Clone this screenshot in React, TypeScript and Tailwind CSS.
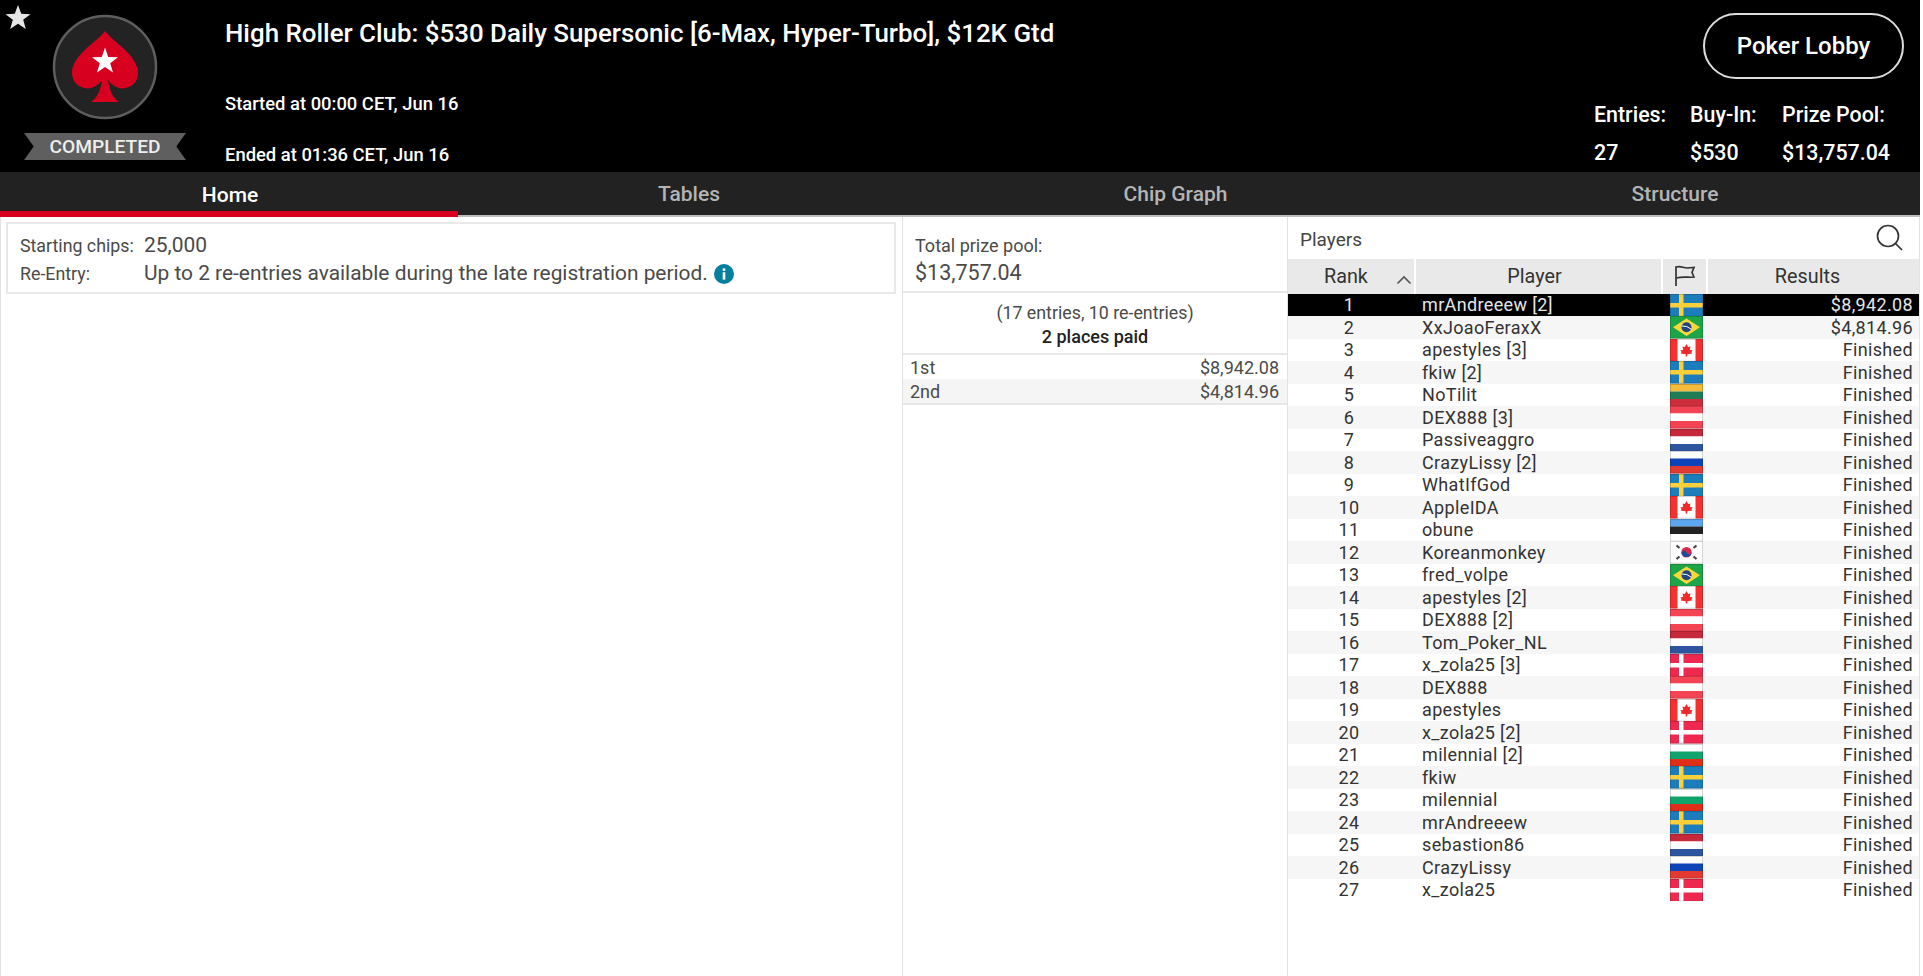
import React from "react";

type Code = "se" | "br" | "ca" | "lt" | "at" | "nl" | "ru" | "ee" | "kr" | "dk" | "bg";

const Stripes = ({ c }: { c: [string, string, string] }) => (
  <>
    <rect width="33" height="7.5" y="0" fill={c[0]} />
    <rect width="33" height="7.5" y="7.5" fill={c[1]} />
    <rect width="33" height="7.5" y="15" fill={c[2]} />
  </>
);

const FlagArt = ({ code }: { code: Code }) => {
  switch (code) {
    case "se":
      return (
        <>
          <rect width="33" height="22.5" fill="#1b7dbb" />
          <rect x="9" width="4.5" height="22.5" fill="#fdd03b" />
          <rect y="9" width="33" height="4.5" fill="#fdd03b" />
        </>
      );
    case "br":
      return (
        <>
          <rect width="33" height="22.5" fill="#1ea548" />
          <path d="M16.5 2.5 L30 11.2 L16.5 20 L3 11.2 Z" fill="#fbd83a" />
          <circle cx="16.5" cy="11.2" r="5" fill="#25437f" />
          <path d="M11.8 10 Q17 9.5 21 13" stroke="#fff" strokeWidth="1" fill="none" />
        </>
      );
    case "ca":
      return (
        <>
          <rect width="33" height="22.5" fill="#fff" />
          <rect width="7.5" height="22.5" fill="#f5302f" />
          <rect x="25.5" width="7.5" height="22.5" fill="#f5302f" />
          <path d="M16.5 5 L18.2 8 L20.4 7.4 L19.8 11 L22.6 11.2 L21.4 13.2 L22.4 14.4 L17.3 15.2 L17.3 17.6 L15.7 17.6 L15.7 15.2 L10.6 14.4 L11.6 13.2 L10.4 11.2 L13.2 11 L12.6 7.4 L14.8 8 Z" fill="#f02a2a" />
        </>
      );
    case "lt":
      return <Stripes c={["#f4bb3c", "#1e7d54", "#cc2e3c"]} />;
    case "at":
      return <Stripes c={["#f44353", "#ffffff", "#f44353"]} />;
    case "nl":
      return <Stripes c={["#c5293b", "#ffffff", "#2e56a0"]} />;
    case "ru":
      return <Stripes c={["#ffffff", "#0f44b8", "#e13a31"]} />;
    case "ee":
      return <Stripes c={["#5ba6ee", "#232323", "#ffffff"]} />;
    case "bg":
      return <Stripes c={["#ffffff", "#10a36b", "#df2f18"]} />;
    case "dk":
      return (
        <>
          <rect width="33" height="22.5" fill="#ef2850" />
          <rect x="9" width="4.5" height="22.5" fill="#fff" />
          <rect y="9" width="33" height="4.5" fill="#fff" />
        </>
      );
    case "kr":
      return (
        <>
          <rect width="33" height="22.5" fill="#fff" />
          <circle cx="16.5" cy="11.2" r="5.2" fill="#d8294a" />
          <path d="M11.5 12.4 A5.2 5.2 0 0 0 21.6 10.2 A2.6 2.6 0 0 1 16.5 11.2 A2.6 2.6 0 0 0 11.5 12.4 Z" fill="#1c4e96" />
          <g stroke="#444" strokeWidth="2.2">
            <path d="M6.5 4.5 L9.5 7" />
            <path d="M23.5 7 L26.5 4.5" />
            <path d="M6.5 18 L9.5 15.5" />
            <path d="M23.5 15.5 L26.5 18" />
          </g>
        </>
      );
  }
};

const Flag = ({ code }: { code: Code }) => (
  <svg width="33" height="22.5" viewBox="0 0 33 22.5" className="block">
    <FlagArt code={code} />
    <rect x="0.4" y="0.4" width="32.2" height="21.7" fill="none" stroke="#000" strokeOpacity="0.22" strokeWidth="0.8" />
  </svg>
);

const players: [string, Code, string][] = [
  ["mrAndreeew [2]", "se", "$8,942.08"],
  ["XxJoaoFeraxX", "br", "$4,814.96"],
  ["apestyles [3]", "ca", "Finished"],
  ["fkiw [2]", "se", "Finished"],
  ["NoTilit", "lt", "Finished"],
  ["DEX888 [3]", "at", "Finished"],
  ["Passiveaggro", "nl", "Finished"],
  ["CrazyLissy [2]", "ru", "Finished"],
  ["WhatIfGod", "se", "Finished"],
  ["AppleIDA", "ca", "Finished"],
  ["obune", "ee", "Finished"],
  ["Koreanmonkey", "kr", "Finished"],
  ["fred_volpe", "br", "Finished"],
  ["apestyles [2]", "ca", "Finished"],
  ["DEX888 [2]", "at", "Finished"],
  ["Tom_Poker_NL", "nl", "Finished"],
  ["x_zola25 [3]", "dk", "Finished"],
  ["DEX888", "at", "Finished"],
  ["apestyles", "ca", "Finished"],
  ["x_zola25 [2]", "dk", "Finished"],
  ["milennial [2]", "bg", "Finished"],
  ["fkiw", "se", "Finished"],
  ["milennial", "bg", "Finished"],
  ["mrAndreeew", "se", "Finished"],
  ["sebastion86", "nl", "Finished"],
  ["CrazyLissy", "ru", "Finished"],
  ["x_zola25", "dk", "Finished"],
];

const Logo = () => (
  <svg width="108" height="108" viewBox="0 0 108 108" className="block">
    <circle cx="54" cy="54" r="51" fill="#232323" stroke="#5e5e5e" strokeWidth="2.5" />
    <path
      d="M54 18 C62 29 87 42 87 60 C87 73 72 80 62 72 C60 71 58 69 57 66 C58 76 61 84 68 89 L40 89 C47 84 50 76 51 66 C50 69 48 71 46 72 C36 80 21 73 21 60 C21 42 46 29 54 18 Z"
      fill="#d7001f"
    />
    <path d="M54 34.5 L57.2 44 L67 44.2 L59.2 50.2 L62 59.5 L54 54 L46 59.5 L48.8 50.2 L41 44.2 L50.8 44 Z" fill="#fff" />
  </svg>
);

export default function App() {
  return (
    <div className="w-[1923px] h-[976px] overflow-hidden bg-white font-['Roboto',sans-serif]">
      <div className="w-[1920px] h-full flex flex-col">
        {/* header */}
        <div className="h-[172px] bg-black text-white flex shrink-0">
          <div className="w-[225px] shrink-0 relative flex flex-col items-start">
            <svg width="26" height="26" viewBox="0 0 24 24" className="absolute left-[5px] top-[4px]">
              <path d="M12 1 L15 9 L23.5 9.4 L16.8 14.6 L19.2 23 L12 18.2 L4.8 23 L7.2 14.6 L0.5 9.4 L9 9 Z" fill="#e6e6e6" />
            </svg>
            <div className="mt-[13px] w-[210px] flex justify-center">
              <Logo />
            </div>
            <div className="mt-[12px] w-[210px] flex justify-center">
              <div className="w-[162px] h-[27px] pt-[2px] bg-[#5f5f5f] flex items-center justify-center text-[19.2px] font-medium text-[#eeeeee] [clip-path:polygon(0_0,100%_0,94%_50%,100%_100%,0_100%,6%_50%)]">
                COMPLETED
              </div>
            </div>
          </div>
          <div className="flex-1 flex flex-col">
            <div className="mt-[17px] text-[25.9px] leading-[32px] font-medium whitespace-nowrap">
              High Roller Club: $530 Daily Supersonic [6-Max, Hyper-Turbo], $12K Gtd
            </div>
            <div className="mt-[43px] text-[18.4px] leading-[24px] font-medium">Started at 00:00 CET, Jun 16</div>
            <div className="mt-[27px] text-[18.4px] leading-[24px] font-medium">Ended at 01:36 CET, Jun 16</div>
          </div>
          <div className="w-[330px] shrink-0 flex flex-col items-end pr-[16px]">
            <div className="mt-[13px] w-[201px] h-[66px] rounded-full border-2 border-[#dcdcdc] flex items-center justify-center text-[24px] font-medium">
              Poker Lobby
            </div>
            <div className="mt-[23px] w-full pl-[4px] grid grid-cols-[96px_92px_auto] text-[21.4px] font-medium leading-[26px] gap-y-[12px]">
              <div>Entries:</div>
              <div>Buy-In:</div>
              <div>Prize Pool:</div>
              <div>27</div>
              <div>$530</div>
              <div>$13,757.04</div>
            </div>
          </div>
        </div>

        {/* tabs */}
        <div className="h-[45px] bg-[#222222] flex shrink-0 border-b-2 border-[#bdbdbd] text-[21px] font-medium text-[#b4b4b4]">
          <div className="w-[458px] h-[45px] border-b-[6px] pt-[9px] pl-[2px] border-[#d7001f] flex items-center justify-center text-white">Home</div>
          <div className="w-[461px] pt-[2px] pl-[1px] flex items-center justify-center">Tables</div>
          <div className="w-[511px] pt-[2px] pl-[2px] flex items-center justify-center">Chip Graph</div>
          <div className="flex-1 pt-[2px] flex items-center justify-center">Structure</div>
        </div>

        {/* body */}
        <div className="flex-1 flex min-h-0">
          <div className="w-[903px] shrink-0 border-r border-[#e2e2e2] border-l pl-[5px] pr-[6px] pt-[5px]">
            <div className="h-[72px] border-2 border-[#e8e8e8] px-[12px] pt-[8px] text-[#4a4a4a]">
              <div className="flex items-center h-[28px]">
                <div className="w-[124px] text-[17.8px]">Starting chips:</div>
                <div className="text-[21px]">25,000</div>
              </div>
              <div className="flex items-center h-[28px]">
                <div className="w-[124px] text-[17.8px]">Re-Entry:</div>
                <div className="text-[20.9px]">Up to 2 re-entries available during the late registration period.</div>
                <svg width="20" height="20" viewBox="0 0 20 20" className="ml-[6px]">
                  <circle cx="10" cy="10" r="10" fill="#067e9f" />
                  <rect x="8.7" y="8.2" width="2.6" height="7.4" fill="#fff" />
                  <rect x="8.7" y="4.4" width="2.6" height="2.4" fill="#fff" />
                </svg>
              </div>
            </div>
          </div>

          <div className="w-[385px] shrink-0 border-r border-[#e2e2e2] text-[#4a4a4a]">
            <div className="h-[76px] border-b-2 border-[#e8e8e8] pl-[12px] pt-[17px]">
              <div className="text-[18px] leading-[24px]">Total prize pool:</div>
              <div className="text-[21.5px] leading-[30px]">$13,757.04</div>
            </div>
            <div className="h-[62px] border-b-2 border-[#e8e8e8] text-center pt-[8px] leading-[24px]">
              <div className="text-[17.8px]">(17 entries, 10 re-entries)</div>
              <div className="text-[18px] font-medium text-[#222222]">2 places paid</div>
            </div>
            <div className="border-b-2 border-[#e8e8e8] text-[18px]">
              <div className="h-[24px] flex items-center justify-between pl-[7px] pr-[8px]">
                <span>1st</span>
                <span>$8,942.08</span>
              </div>
              <div className="h-[24px] flex items-center justify-between pl-[7px] pr-[8px] bg-[#f5f5f5]">
                <span>2nd</span>
                <span>$4,814.96</span>
              </div>
            </div>
          </div>

          <div className="flex-1 min-w-0 border-r border-[#e2e2e2]">
            <div className="h-[42px] flex items-center justify-between pl-[12px] pr-[14px] text-[19px] text-[#444444]">
              <span className="pt-[4px]">Players</span>
              <svg width="30" height="30" viewBox="0 0 30 30" fill="none" stroke="#333333" strokeWidth="1.7">
                <circle cx="13" cy="13" r="10.5" />
                <path d="M20.5 20.5 L27 27" />
              </svg>
            </div>
            <div className="h-[34.5px] bg-[#e9e9e9] flex text-[19.8px] text-[#333333]">
              <div className="w-[128px] flex items-center pl-[36px] pt-[2px] border-r-2 border-white relative">
                Rank
                <svg width="16" height="10" viewBox="0 0 16 10" fill="none" stroke="#555555" strokeWidth="1.6" className="absolute right-[2px] top-[16px]">
                  <path d="M1.5 8.5 L8 2 L14.5 8.5" />
                </svg>
              </div>
              <div className="w-[247px] flex items-center justify-center border-r-2 border-white pt-[2px] pr-[8px]">Player</div>
              <div className="w-[45px] flex items-center justify-center border-r-2 border-white">
                <svg width="22" height="22" viewBox="0 0 22 22" fill="none" stroke="#333333" strokeWidth="1.7">
                  <path d="M2 21 V2 C7 0.5 9 3 13 3 L20 2.5 L18 7.5 L20 12 C15 13 11 11 2 13" />
                </svg>
              </div>
              <div className="flex-1 flex items-center justify-center pt-[2px] pr-[12px]">Results</div>
            </div>
            {players.map(([name, flag, result], i) => (
              <div
                key={i}
                className={
                  i === 0
                    ? "h-[22.5px] flex items-center bg-black text-[#e6e6e6] text-[18px] tracking-[0.35px]"
                    : i % 2 === 1
                      ? "h-[22.5px] flex items-center bg-[#f6f6f6] text-[#333333] text-[18px] tracking-[0.35px]"
                      : "h-[22.5px] flex items-center bg-white text-[#333333] text-[18px] tracking-[0.35px]"
                }
              >
                <div className="w-[122px] text-center">{i + 1}</div>
                <div className="w-[260px] pl-[12px] whitespace-nowrap">{name}</div>
                <div className="w-[33px] shrink-0">
                  <Flag code={flag} />
                </div>
                <div className="flex-1 text-right pr-[6px]">{result}</div>
              </div>
            ))}
          </div>
        </div>
      </div>
    </div>
  );
}
